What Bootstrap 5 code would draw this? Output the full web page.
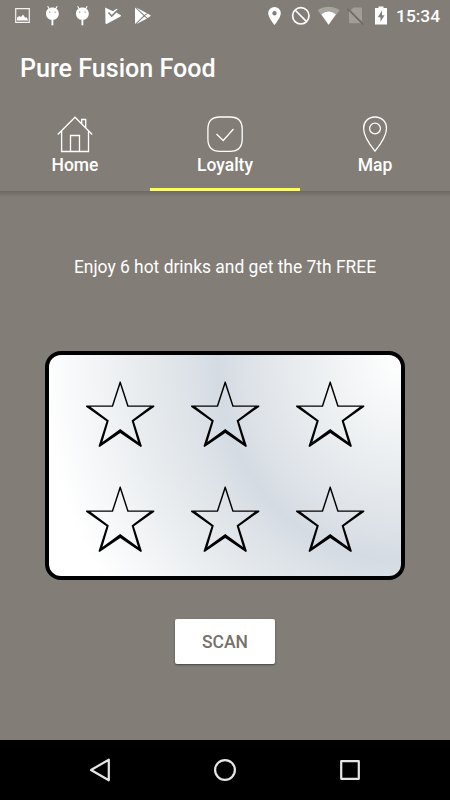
<!DOCTYPE html>
<html lang="en">
<head>
<meta charset="utf-8">
<meta name="viewport" content="width=device-width, initial-scale=1">
<title>Pure Fusion Food</title>
<link href="https://cdn.jsdelivr.net/npm/bootstrap@5.3.0/dist/css/bootstrap.min.css" rel="stylesheet">
<style>
body{background:#827d76;font-family:Roboto,"Liberation Sans",sans-serif;height:800px;overflow:hidden}
svg{display:block;flex:none}
.status{height:32px;padding-left:10px;padding-right:10px}
.left-icons{gap:6px}
.clock{font-size:17.4px;font-weight:500;line-height:32px;width:44px;white-space:nowrap}
.title{height:72px;padding:1px 0 0 20px;font-size:25.1px;font-weight:500;line-height:72px}
.tabs{height:87px}
.tabs .tab-item{width:150px;height:87px;padding:10px 0 0;border-radius:0;border-bottom:3px solid transparent;color:#fff;font-size:17.5px;font-weight:500;line-height:23px}
.tabs .tab-item.active{border-bottom-color:#ffff4d}
.tab-shade{height:6px;background:linear-gradient(#6c6862,#827d76)}
.promo{margin-top:58px;font-size:17.43px;line-height:24px}
.stamp-card{width:360px;height:229px;margin-top:72px;border:4px solid #000;border-radius:16px;padding:26px 0 0 36px;background:radial-gradient(ellipse 366px 400px at 352px 6px,#fff 0,#f3f5f6 15%,#e7ebee 30%,#dde2e8 42%,#d5dbe3 50%,#dde3e8 59%,#e6eaed 69%,#f2f4f6 83%,#fff 98%)}
.stamps{display:grid;grid-template-columns:repeat(3,70px);gap:37px 35px}
.scan{width:100px;height:45px;margin-top:39px;background:#fff;color:#76716a;font-size:17.5px;font-weight:500;border:0;border-radius:2px;padding:2px 0 0;box-shadow:0 1px 2px rgba(0,0,0,.45)}
.navkeys{height:60px;background:#000}
</style>
<script src="https://cdn.jsdelivr.net/npm/bootstrap@5.3.0/dist/js/bootstrap.bundle.min.js"></script>
</head>
<body class="d-flex flex-column text-white m-0">
<svg width="0" height="0" class="position-absolute" aria-hidden="true">
 <symbol id="bug" viewBox="0 0 24 32"><path d="M7.6 6.2 9.3 9M17.2 6.2 15.5 9" stroke="#fff" stroke-width="1.1"/><path fill="#fff" fill-rule="evenodd" d="M12.4 7.6C8.7 7.6 6 10.2 6 13.5S8.3 20 12.4 20s6.4-3.2 6.4-6.5-2.7-5.9-6.4-5.9ZM9.7 11.4a.7.7 0 1 1 0 1.4.7.7 0 0 1 0-1.4Zm5.4 0a.7.7 0 1 1 0 1.4.7.7 0 0 1 0-1.4Z"/><path d="M12.4 20V25.3" stroke="#fff" stroke-width="1.9"/></symbol>
 <symbol id="star" viewBox="0 0 70 68"><path fill="#000" fill-rule="evenodd" d="M34.7.5h1L43.5 24.6H69.2L69.4 25.7 48.9 40.2 56.9 65.2 55.8 66 35.2 52 14.6 66 13.5 65.2 21.5 40.2 1 25.7 1.2 24.6H26.9ZM35.2 3.8 28 25.8H5.5L23.8 39.5 17.4 61 35.2 47.9 53 61 46.6 39.5 64.9 25.8H42.4Z"/></symbol>
</svg>

<header class="status d-flex justify-content-between align-items-center">
 <div class="left-icons d-flex">
  <svg width="24" height="32" viewBox="0 0 24 32"><path d="M5.7 8.7h13.6v13.6H5.7Z" fill="none" stroke="#fff" stroke-width="1.2" opacity=".9"/><path fill="#fff" d="M7 20.5V17.5L9.5 16 11 17 13 14.5 15 17.5H17L18 20.5Z"/></svg>
  <svg width="24" height="32"><use href="#bug"/></svg>
  <svg width="24" height="32"><use href="#bug"/></svg>
  <svg width="24" height="32" viewBox="0 0 24 32"><path fill="#fff" d="M5.2 7.5 13 11.3 16.5 8.8 18 10 16.2 12.5 21 15.2 20.5 16.5 6.6 24 5.5 23.5Z"/><path d="m8.5 12.6 3.2 3.5 6-6" fill="none" stroke="#827d76" stroke-width="1.5"/></svg>
  <svg width="24" height="32" viewBox="0 0 24 32"><path fill="#fff" d="M5 7.5 13.5 15.7 5 24ZM6.2 7.4 17 13.2 14.3 15.1ZM14.3 16.5 17 18.4 6.2 24.2ZM17.7 13.5 21 15.8 17.7 18 15 15.8Z"/></svg>
 </div>
 <div class="d-flex align-items-center">
  <svg width="134" height="32" viewBox="262 0 134 32" fill="#fff">
   <path fill-rule="evenodd" d="M274.5 7a6.3 6.3 0 0 0-6.3 6.3c0 4.4 6.3 11.7 6.3 11.7s6.3-7.3 6.3-11.7A6.3 6.3 0 0 0 274.5 7Zm0 4a2.2 2.2 0 1 1 0 4.4 2.2 2.2 0 0 1 0-4.4Z"/>
   <g fill="none" stroke="#fff" stroke-width="1.7"><circle cx="300.8" cy="15.8" r="8.2"/><path d="m295 10 11.6 11.6"/></g>
   <path opacity=".3" d="M317.7 10.2C321.5 7.6 325 6.7 328.6 6.7s7.2.9 11 3.5L328.6 24.7Z"/><path d="M321.3 14.2q7.3-5.3 14.6 0L328.6 24.7Z"/>
   <path opacity=".25" d="M353.5 7.5H361q1 0 1 1V21.5L350.8 10.2ZM349 11 360.8 23.3H350q-1 0-1-1Z"/><path d="m347.5 9 15.8 15.5" fill="none" stroke="#5f5b56" stroke-width="1.1" opacity=".6"/>
   <path fill-rule="evenodd" d="M378.5 6.5h5v1.5H387V24.5H375V8h3.5ZM382 10.5 377.8 17.2H380.5V21.8L384.5 15.2H382Z"/>
  </svg>
  <span class="clock">15:34</span>
 </div>
</header>

<h1 class="title m-0">Pure Fusion Food</h1>

<nav class="tabs nav nav-pills d-flex">
 <a class="tab-item d-flex flex-column align-items-center text-decoration-none" href="#">
  <svg width="40" height="40" viewBox="0 0 40 40" fill="none" stroke="#fff" stroke-width="1.3"><path d="M2.8 20.5 20 3.2 37.2 20.5M6.6 17V37.5H33.5V17M15.5 37.5V21.5H24.5V37.5M26.7 9.8V5.5H30.7V13.8"/></svg>
  <span>Home</span></a>
 <a class="tab-item active d-flex flex-column align-items-center text-decoration-none" href="#">
  <svg width="40" height="40" viewBox="0 0 40 40" fill="none" stroke="#fff" stroke-width="1.3"><path d="M15 3H25Q37.2 3 37.2 15V25Q37.2 37.3 25 37.3H15Q2.9 37.3 2.9 25V15Q2.9 3 15 3Z"/><path d="m11.5 20 6.7 6.5L28.5 15"/></svg>
  <span>Loyalty</span></a>
 <a class="tab-item d-flex flex-column align-items-center text-decoration-none" href="#">
  <svg width="40" height="40" viewBox="0 0 40 40" fill="none" stroke="#fff" stroke-width="1.3"><path d="M20 3C13 3 8.6 8 8.6 14.5 8.6 22 15 31 20 37.2 25 31 31.5 22 31.5 14.5 31.5 8 27 3 20 3Z"/><circle cx="20" cy="14.5" r="5.4"/></svg>
  <span>Map</span></a>
</nav>
<div class="tab-shade"></div>

<main class="d-flex flex-column align-items-center flex-grow-1">
 <p class="promo mb-0">Enjoy 6 hot drinks and get the 7th FREE</p>
 <section class="stamp-card">
  <div class="stamps">
   <svg width="70" height="68"><use href="#star"/></svg><svg width="70" height="68"><use href="#star"/></svg><svg width="70" height="68"><use href="#star"/></svg>
   <svg width="70" height="68"><use href="#star"/></svg><svg width="70" height="68"><use href="#star"/></svg><svg width="70" height="68"><use href="#star"/></svg>
  </div>
 </section>
 <button class="scan btn" type="button">SCAN</button>
</main>

<footer class="navkeys d-flex align-items-center justify-content-center">
 <svg width="300" height="60" viewBox="75 740 300 60" fill="none" stroke="#e6e6e6" stroke-width="2.2" stroke-linejoin="round"><path d="M91 770 108.8 759.7V780.3Z"/><circle cx="225" cy="770" r="9.9"/><path d="M341.2 761.2h17.6v17.6h-17.6Z"/></svg>
</footer>
</body>
</html>
